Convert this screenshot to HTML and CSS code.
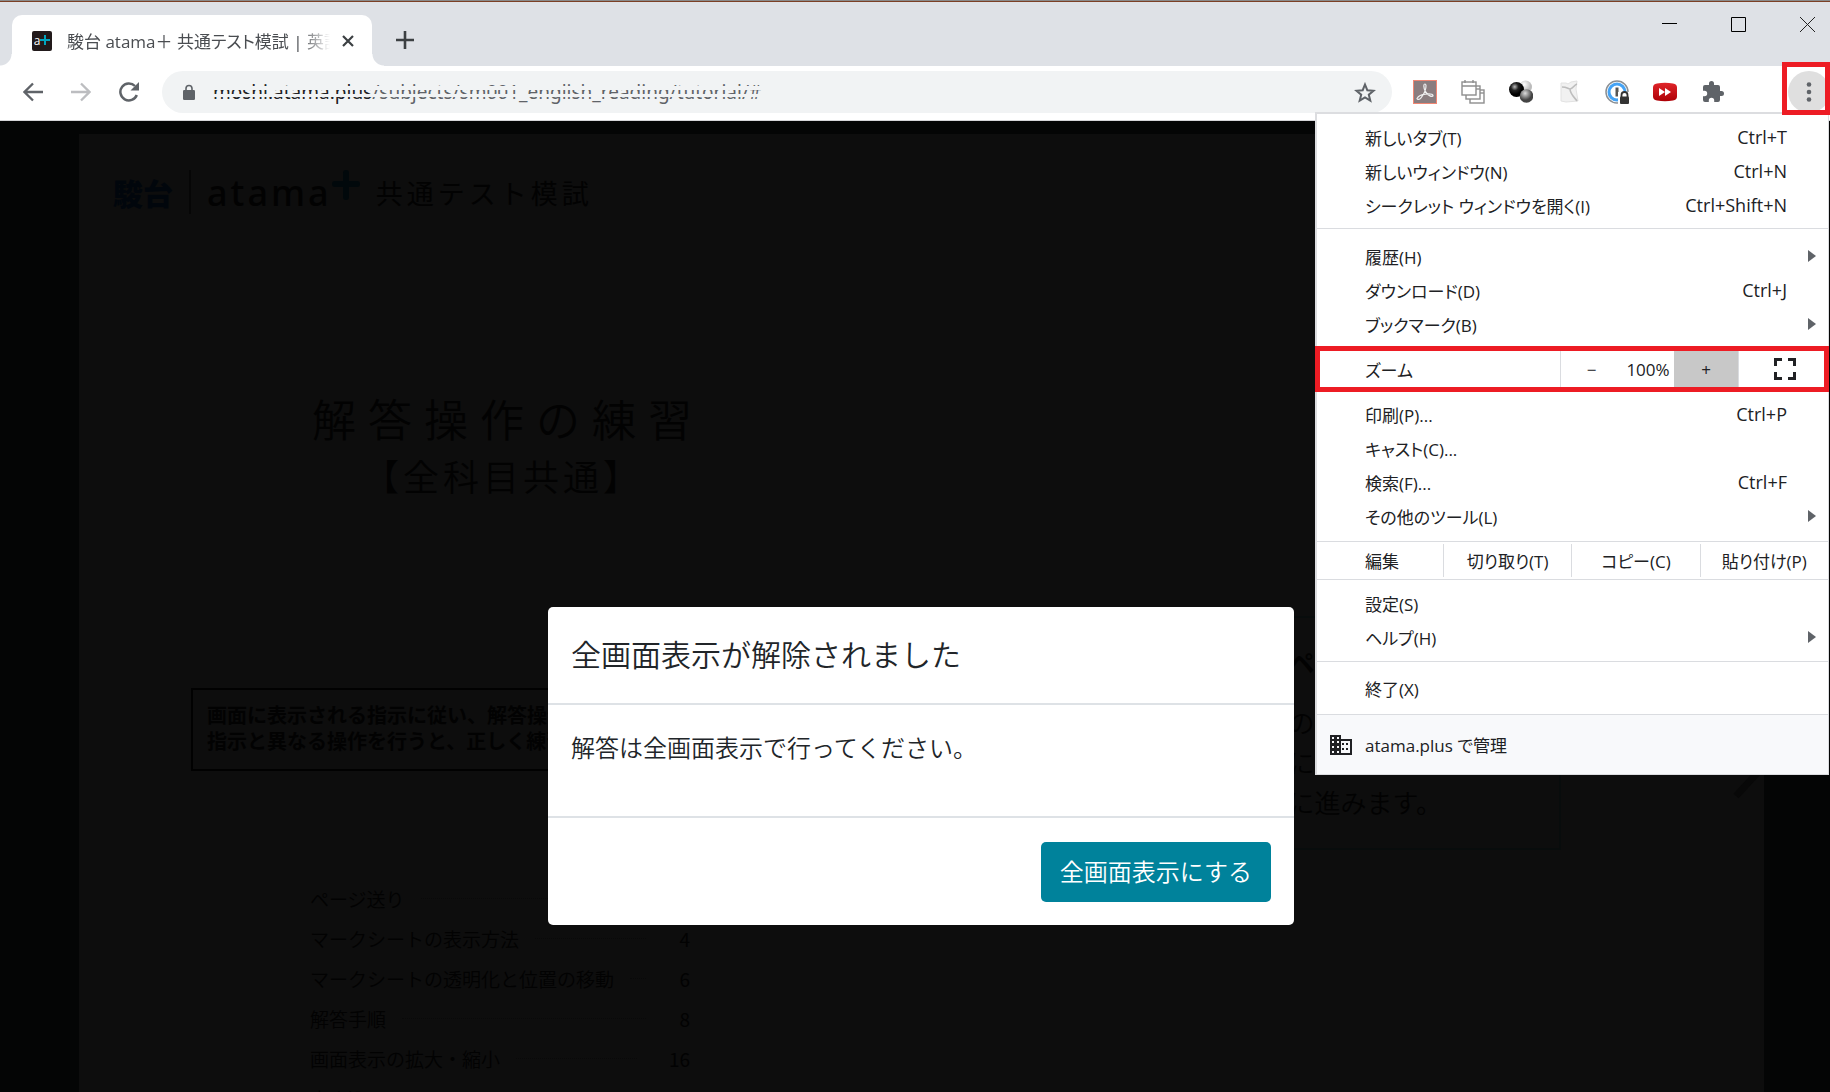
FILE: index.html
```html
<!DOCTYPE html>
<html lang="ja">
<head>
<meta charset="utf-8">
<title>駿台 atama＋ 共通テスト模試</title>
<link rel="stylesheet" href="styles.css">
</head>
<body>
<div class="browser">
  <div class="desktop-edge"></div>
  <header class="tabstrip">
    <div class="tab">
      <span class="favicon"><span>a</span><svg viewBox="0 0 10 10" width="10" height="10"><path d="M5 0v10M0 5h10" stroke="#00a5bf" stroke-width="2"/></svg></span>
      <span class="tab-title">駿台 atama＋ 共通テスト模試 | 英語</span>
      <button class="icon-btn tab-close" aria-label="タブを閉じる"><svg viewBox="0 0 12 12" width="12" height="12"><path d="M1 1l10 10M11 1L1 11" stroke="#3c4043" stroke-width="2.200"/></svg></button>
    </div>
    <button class="icon-btn new-tab" aria-label="新しいタブ"><svg viewBox="0 0 18 18" width="18" height="18"><path d="M9 0v18M0 9h18" stroke="#3c4043" stroke-width="2.600"/></svg></button>
    <div class="window-controls">
      <button class="icon-btn" aria-label="最小化"><svg viewBox="0 0 15 15" width="15" height="15"><path d="M0 6.500h15" stroke="#000"/></svg></button>
      <button class="icon-btn" aria-label="最大化"><svg viewBox="0 0 15 15" width="15" height="15"><path d="M.5.5h14v14H.5z" fill="none" stroke="#000"/></svg></button>
      <button class="icon-btn" aria-label="閉じる"><svg viewBox="0 0 15 15" width="15" height="15"><path d="M0 0l15 15M15 0L0 15" stroke="#222"/></svg></button>
    </div>
  </header>

  <div class="toolbar">
    <div class="nav-buttons">
      <button class="icon-btn" aria-label="戻る"><svg viewBox="0 0 20 20" width="20" height="20"><path d="M20 10H2M10 1.500L1.500 10l8.500 8.500" fill="none" stroke="#5f6368" stroke-width="2.300"/></svg></button>
      <button class="icon-btn" aria-label="進む"><svg viewBox="0 0 20 20" width="20" height="20"><path d="M0 10h18M10 1.500l8.500 8.500-8.500 8.500" fill="none" stroke="#bcbdc0" stroke-width="2.300"/></svg></button>
      <button class="icon-btn" aria-label="再読み込み"><svg viewBox="0 0 20 20" width="20" height="20"><path d="M17.800 13A8.500 8.500 0 1 1 16 4" fill="none" stroke="#5f6368" stroke-width="2.500"/><path d="M20 0v8.500h-8.500z" fill="#5f6368"/></svg></button>
    </div>
    <div class="omnibox">
      <svg class="lock" viewBox="0 0 12 16" width="12" height="16"><path d="M3 7V4.500a3 3 0 0 1 6 0V7" fill="none" stroke="#5f6368" stroke-width="1.600"/><rect y="6" width="12" height="10" rx="1.200" fill="#5f6368"/></svg>
      <span class="url"><span class="host">moshi.atama.plus</span>/subjects/sm001_english_reading/tutorial/#</span>
      <button class="icon-btn star" aria-label="ブックマークに追加"><svg viewBox="0 0 22 21" width="22" height="21"><path d="M11 2.500l2.300 5.700 6.200.5-4.700 4 1.500 6-5.300-3.300-5.300 3.300 1.500-6-4.700-4 6.200-.5z" fill="none" stroke="#5f6368" stroke-width="2"/></svg></button>
    </div>
    <div class="extensions">
      <svg viewBox="0 0 24 24" width="24" height="24"><rect x=".5" y=".5" width="23" height="23" fill="#8a7d7f" stroke="#f08673"/><path d="M4 18.500c1.500-2.500 5.500-4 8.500-4.300 3-.4 7-.2 7.500 1.300.2 1-1.500 1.200-3 .4-4-2.200-6-6.500-6.200-10 0-2.500 2-2.500 2.200-.3.200 3.500-2.500 9-5 12.200-1.500 1.900-3.500 2.200-4 .7z" fill="none" stroke="#eee" stroke-width="1.200"/></svg>
      <svg viewBox="0 0 24 24" width="24" height="24" fill="#fff" stroke="#8e8e8e" stroke-width="1.400"><rect x="9" y="10" width="14" height="13"/><path d="M9 13h14"/><rect x="5" y="6" width="14" height="13"/><path d="M5 9h14"/><rect x="1" y="2" width="14" height="13"/><path d="M1 6h14M4 0v3M12 0v3"/></svg>
      <svg viewBox="0 0 24 24" width="24" height="24"><defs><radialGradient id="b" cx=".38" cy=".32"><stop offset="0" stop-color="#bbb"/><stop offset=".5" stop-color="#222"/><stop offset="1" stop-color="#000"/></radialGradient><radialGradient id="w" cx=".4" cy=".3"><stop offset="0" stop-color="#fff"/><stop offset="1" stop-color="#bbb"/></radialGradient><radialGradient id="g" cx=".4" cy=".3"><stop offset="0" stop-color="#ddd"/><stop offset="1" stop-color="#444"/></radialGradient></defs><circle cx="16.500" cy="7" r="6.500" fill="url(#w)"/><circle cx="7.500" cy="9.500" r="7.500" fill="url(#b)"/><circle cx="17.500" cy="16" r="6.800" fill="url(#g)"/></svg>
      <svg viewBox="0 0 24 24" width="24" height="24"><path d="M4 3h5l2 1 3-2 6-1-1 8 2 12-12 1-5-1z" fill="#f1f1f1" stroke="#e2e2e2"/><path d="M5 7c5 0 6 2 8 2 3 0 4-4 7-5M13 9c0 5 5 9 7 12" fill="none" stroke="#bdbdbd" stroke-width="1.600"/></svg>
      <svg viewBox="0 0 24 24" width="24" height="24"><circle cx="12" cy="12" r="11" fill="#fff" stroke="#8b8f93" stroke-width="1.500"/><circle cx="12" cy="12" r="8" fill="#fff" stroke="#45a3f5" stroke-width="3"/><path d="M12 7.500v9" stroke="#555" stroke-width="3"/><path d="M13 12h11v12H13z" fill="#fff"/><path d="M16.500 17v-2a3 3 0 0 1 6 0v2" fill="none" stroke="#333" stroke-width="1.800"/><rect x="15" y="16.500" width="9" height="7.500" rx="1" fill="#333"/></svg>
      <svg viewBox="0 0 24 24" width="24" height="24"><defs><linearGradient id="r" x2="0" y2="1"><stop stop-color="#e0252a"/><stop offset="1" stop-color="#ad0006"/></linearGradient></defs><path d="M4 3.500Q12 2 20 3.500q4 .5 4 4v9q0 3.500-4 4-8 1.500-16 0-4-.5-4-4v-9q0-3.500 4-4z" fill="url(#r)"/><path d="M6 8l6 4-6 4zM12 8l6 4-6 4z" fill="#fff"/></svg>
      <svg viewBox="0 0 24 24" width="24" height="24"><path d="M20.500 11H19V7a2 2 0 0 0-2-2h-4V3.500a2.500 2.500 0 0 0-5 0V5H4a2 2 0 0 0-2 2v3.800h1.500a2.700 2.700 0 0 1 0 5.400H2V20a2 2 0 0 0 2 2h3.800v-1.500a2.700 2.700 0 0 1 5.400 0V22H17a2 2 0 0 0 2-2v-4h1.500a2.500 2.500 0 0 0 0-5z" fill="#5f6368"/></svg>
    </div>
    <button class="icon-btn more" aria-label="メニュー"><svg viewBox="0 0 6 20" width="6" height="20" fill="#5f6368"><circle cx="3" cy="2.500" r="2.300"/><circle cx="3" cy="10" r="2.300"/><circle cx="3" cy="17.500" r="2.300"/></svg></button>
  </div>

  <main class="page">
    <div class="paper">
      <section class="cover">
        <div class="brand">
          <span class="sundai">駿台</span>
          <span class="atama">atama<svg viewBox="0 0 28 30" width="28" height="30"><path d="M14 3v24M3 14h22" stroke="#01080b" stroke-width="6" stroke-linecap="round"/></svg></span>
          <span class="exam">共通テスト模試</span>
        </div>
        <h1>解答操作の練習</h1>
        <p class="subtitle">【全科目共通】</p>
        <p class="notice">画面に表示される指示に従い、解答操作<br>指示と異なる操作を行うと、正しく練習</p>
        <ol class="toc">
          <li><span>ページ送り</span><i></i></li>
          <li><span>マークシートの表示方法</span><i></i><b>4</b></li>
          <li><span>マークシートの透明化と位置の移動</span><i></i><b>6</b></li>
          <li><span>解答手順</span><i></i><b>8</b></li>
          <li><span>画面表示の拡大・縮小</span><i></i><b>16</b></li>
          <li><span>書き込みツール</span><i></i><b>18</b></li>
        </ol>
      </section>
      <section class="guide">
        <div class="guide-box">
          <strong>ペー</strong>
          <p>の</p>
          <p>に</p>
          <p>に進みます。</p>
        </div>
        <svg class="next" viewBox="0 0 32 60" width="32" height="60"><path d="M4 4l24 26L4 56" fill="none" stroke="#080808" stroke-width="7"/></svg>
      </section>
    </div>

    <div class="dialog" role="dialog" aria-labelledby="dialog-title">
      <h2 id="dialog-title">全画面表示が解除されました</h2>
      <p>解答は全画面表示で行ってください。</p>
      <div class="dialog-footer"><button class="primary">全画面表示にする</button></div>
    </div>
  </main>

  <nav class="menu" aria-label="メニュー">
    <div class="group">
      <button class="item"><span>新しいタブ(T)</span><kbd>Ctrl+T</kbd></button>
      <button class="item"><span>新しいウィンドウ(N)</span><kbd>Ctrl+N</kbd></button>
      <button class="item"><span>シークレット ウィンドウを開く(I)</span><kbd>Ctrl+Shift+N</kbd></button>
    </div>
    <div class="group history">
      <button class="item sub">履歴(H)</button>
      <button class="item"><span>ダウンロード(D)</span><kbd>Ctrl+J</kbd></button>
      <button class="item sub">ブックマーク(B)</button>
    </div>
    <div class="zoom-row">
      <span class="row-label">ズーム</span>
      <button class="minus" aria-label="縮小">−</button>
      <span class="percent">100%</span>
      <button class="plus" aria-label="拡大">+</button>
      <button class="fullscreen" aria-label="全画面表示"><svg viewBox="0 0 22 22" width="22" height="22"><path d="M1.500 8V1.500H8M14 1.500h6.500V8M20.500 14v6.500H14M8 20.500H1.500V14" fill="none" stroke="#202124" stroke-width="3"/></svg></button>
    </div>
    <div class="group tools">
      <button class="item"><span>印刷(P)...</span><kbd>Ctrl+P</kbd></button>
      <button class="item">キャスト(C)...</button>
      <button class="item"><span>検索(F)...</span><kbd>Ctrl+F</kbd></button>
      <button class="item sub">その他のツール(L)</button>
    </div>
    <div class="edit-row">
      <span class="row-label">編集</span>
      <button>切り取り(T)</button>
      <button>コピー(C)</button>
      <button>貼り付け(P)</button>
    </div>
    <div class="group settings">
      <button class="item">設定(S)</button>
      <button class="item sub">ヘルプ(H)</button>
    </div>
    <div class="group quit">
      <button class="item">終了(X)</button>
    </div>
    <a class="managed" href="#">
      <svg viewBox="0 0 22 20" width="22" height="20"><path d="M0 0h11v4h11v16H0z" fill="#202124"/><path d="M2 2h2v2H2zM7 2h2v2H7zM2 6h2v2H2zM7 6h2v2H7zM2 11h2v2H2zM7 11h2v2H7zM2 16h2v2H2zM7 16h2v2H7zM11 6h9v12h-9z" fill="#f8f9fb"/><path d="M12 8h2v2h-2zM16 8h2v2h-2zM12 13h2v2h-2zM16 13h2v2h-2z" fill="#202124"/></svg>
      atama.plus で管理
    </a>
  </nav>
  <div class="highlight" aria-hidden="true"></div>
</div>
</body>
</html>
```
FILE: styles.css
```css
* { box-sizing: border-box; }
body {
  margin: 0;
  font-family: "Open Sans", "Noto Sans CJK JP", sans-serif;
  font-size: 18px;
  color: #202124;
}
button {
  font: inherit;
  color: inherit;
  background: none;
  border: 0;
  padding: 0;
}
svg { display: block; flex: none; }
h1, h2, p, ol { margin: 0; padding: 0; font-weight: 350; }

.browser {
  position: relative;
  display: flex;
  flex-direction: column;
  height: 100vh;
  overflow: hidden;
  background: #040505;
}
.icon-btn { display: grid; place-items: center; flex: none; }
.desktop-edge {
  flex: none;
  height: 2px;
  background: linear-gradient(#8a8a8a 1px, #7b3f25 1px);
}

/* tab strip */
.tabstrip {
  display: flex;
  flex: none;
  height: 64px;
  padding-left: 12px;
  background: #dee1e6;
}
.tab {
  position: relative;
  display: flex;
  align-items: center;
  width: 360px;
  height: 51px;
  margin-top: 13px;
  padding: 0 18px 0 20px;
  background: #fff;
  border-radius: 10px 10px 0 0;
}
.tab::before, .tab::after {
  content: "";
  position: absolute;
  bottom: 0;
  width: 12px;
  height: 12px;
}
.tab::before { left: -12px; background: radial-gradient(circle at 0 0, #dee1e6 11px, #fff 12px); }
.tab::after { right: -12px; background: radial-gradient(circle at 100% 0, #dee1e6 11px, #fff 12px); }
.favicon {
  display: flex;
  align-items: center;
  justify-content: center;
  width: 20px;
  height: 20px;
  flex: none;
  border-radius: 2px;
  background: #221a1b;
  color: #fff;
  font-size: 12px;
  line-height: 20px;
}
.favicon svg { margin-bottom: 2px; }
.tab-title {
  flex: 1;
  margin: 0 12px 0 15px;
  overflow: hidden;
  white-space: nowrap;
  font-size: 17px;
  font-weight: 400;
  font-feature-settings: "palt";
  color: #4a4d51;
  mask-image: linear-gradient(to left, transparent, #000 30px);
}
.new-tab { width: 36px; height: 36px; margin: 20px 0 0 15px; }
.window-controls {
  display: flex;
  align-items: flex-start;
  gap: 54px;
  margin: 15px 15px 0 auto;
}

/* toolbar */
.toolbar {
  display: flex;
  align-items: center;
  flex: none;
  height: 55px;
  padding: 0 0 2px 23px;
  background: #fff;
  border-bottom: 1px solid #d5d5d8;
}
.nav-buttons { display: flex; gap: 28px; }
.omnibox {
  position: relative;
  display: flex;
  align-items: center;
  flex: 1;
  height: 42px;
  margin: 0 21px 0 23px;
  padding: 0 16px 0 21px;
  border-radius: 21px;
  background: #f1f3f4;
}
.url {
  position: relative;
  flex: 1;
  margin-left: 18px;
  color: #5f6368;
  font-family: "Noto Sans", sans-serif;
  font-size: 19px;
  white-space: nowrap;
  line-height: 26px;
}
.url::after {
  content: "";
  position: absolute;
  inset: 0;
  background: linear-gradient(transparent 7px, #f1f3f4 7px, #f1f3f4 11px, transparent 11px, transparent 15px, #f1f3f4 15px, #f1f3f4 18px, transparent 18px);
}
.host { color: #202124; }
.extensions { display: flex; gap: 24px; }
.more {
  width: 42px;
  height: 42px;
  margin-left: 63px;
  border-radius: 21px;
  background: #dfdfdf;
}
.highlight {
  position: absolute;
  top: 62px;
  right: 0;
  width: 48px;
  height: 53px;
  border: 5px solid #ed1c24;
}

/* dimmed page */
.page {
  position: relative;
  flex: 1;
  min-height: 0;
  padding: 13px 66px 0 79px;
}
.paper {
  display: grid;
  grid-template-columns: 1fr 1fr;
  height: 100%;
  overflow: hidden;
  background: #0d0d0d;
  color: #020202;
  font-family: "Noto Sans CJK JP", sans-serif;
}
.cover { padding: 36px 0 0 34px; }
.brand { display: flex; align-items: center; height: 44px; }
.sundai {
  padding-right: 16px;
  border-right: 2px solid #060606;
  color: #01060c;
  font-size: 30px;
  font-weight: 900;
  line-height: 44px;
}
.atama {
  display: flex;
  align-items: center;
  margin: 0 16px;
  font-family: "Noto Sans", sans-serif;
  font-size: 36px;
  font-weight: 500;
  letter-spacing: 3px;
}
.atama svg { margin-bottom: 14px; }
.exam { font-size: 27px; letter-spacing: 4px; }
h1 {
  margin: 167px 0 0 199px;
  font-size: 44px;
  line-height: 74px;
  letter-spacing: 12px;
}
.subtitle {
  margin-left: 250px;
  font-size: 36px;
  line-height: 40px;
  letter-spacing: 4px;
}
.notice {
  width: 530px;
  height: 83px;
  margin: 193px 0 0 78px;
  padding: 12px 0 0 14px;
  border: 2px solid #010101;
  font-size: 20px;
  font-weight: 700;
  line-height: 26px;
}
.toc {
  width: 380px;
  margin: 107px 0 0 197px;
  list-style: none;
  font-size: 19px;
}
.toc li { display: flex; align-items: center; height: 40px; }
.toc i { flex: 1; margin: 0 32px 0 16px; border-top: 1px dotted #090909; }
.toc b { min-width: 12px; text-align: right; font-weight: 400; }
.guide {
  display: flex;
  align-items: flex-start;
  justify-content: space-between;
  padding: 482px 0 0 0;
}
.guide-box {
  width: 639px;
  height: 234px;
  padding: 24px 0 0 365px;
  border: 2px solid #080c0c;
  font-size: 26px;
  line-height: 40px;
}
.guide-box strong { display: block; margin-bottom: 20px; }
.next { margin-top: 124px; }

/* dialog */
.dialog {
  position: absolute;
  top: 486px;
  left: 548px;
  width: 746px;
  border-radius: 5px;
  background: #fff;
  color: #212529;
  font-family: "Noto Sans CJK JP", sans-serif;
}
.dialog h2 {
  padding: 22px 23px 25px;
  border-bottom: 2px solid #dee2e6;
  font-size: 30px;
  line-height: 49px;
}
.dialog p {
  height: 111px;
  padding: 22px 23px;
  font-size: 24px;
  line-height: 40px;
}
.dialog-footer {
  display: flex;
  justify-content: flex-end;
  padding: 24px 23px 23px;
  border-top: 2px solid #dee2e6;
}
.primary {
  padding: 0 19px 4px;
  height: 60px;
  border-radius: 5px;
  background: #00829b;
  color: #fff;
  font-size: 24px;
  font-weight: 350;
}

/* browser menu */
.menu {
  position: absolute;
  top: 112px;
  right: 1px;
  width: 514px;
  border: 2px solid #dcdde0;
  border-width: 2px 1px 1px 2px;
  background: #fff;
  font-size: 17px;
  font-feature-settings: "palt";
}
.group { padding: 6px 0; }
.history { padding: 10px 0 5px; border-top: 1px solid #dadce0; }
.tools { padding: 5px 0 8px; }
.settings { padding: 6px 0 7px; border-top: 1px solid #dadce0; }
.quit { padding: 9px 0; border-top: 1px solid #dadce0; }
.item {
  display: flex;
  align-items: center;
  justify-content: space-between;
  width: 100%;
  height: 34px;
  padding: 0 41px 0 48px;
}
.item kbd { font-family: inherit; font-size: 18px; }
.sub { padding-right: 12px; }
.sub::after {
  content: "";
  border: solid transparent;
  border-width: 6px 0 6px 8px;
  border-left-color: #5f6368;
}
.zoom-row {
  display: flex;
  align-items: stretch;
  height: 46px;
  margin: 0 -1px 0 -2px;
  border: 5px solid #ed1c24;
}
.row-label { flex: 1; padding-left: 45px; align-self: center; }
.zoom-row button { border-right: 1px solid #dadce0; }
.zoom-row .minus { width: 62px; border: 0; border-left: 1px solid #dadce0; }
.percent { width: 52px; align-self: center; text-align: center; }
.zoom-row .plus { width: 65px; background: #c8c8c8; }
.zoom-row .fullscreen {
  display: grid;
  place-items: center;
  width: 85px;
  padding-left: 6px;
  border: 0;
}
.edit-row {
  display: grid;
  grid-template-columns: 126px 1fr 1fr 1fr;
  height: 38px;
  padding: 2px 0;
  border-top: 1px solid #dadce0;
}
.edit-row .row-label { padding-left: 48px; }
.edit-row button { border-left: 1px solid #dadce0; }
.managed {
  display: flex;
  align-items: center;
  gap: 13px;
  height: 60px;
  padding-left: 13px;
  border-top: 1px solid #dadce0;
  background: #f8f9fb;
  color: inherit;
  text-decoration: none;
}
```
